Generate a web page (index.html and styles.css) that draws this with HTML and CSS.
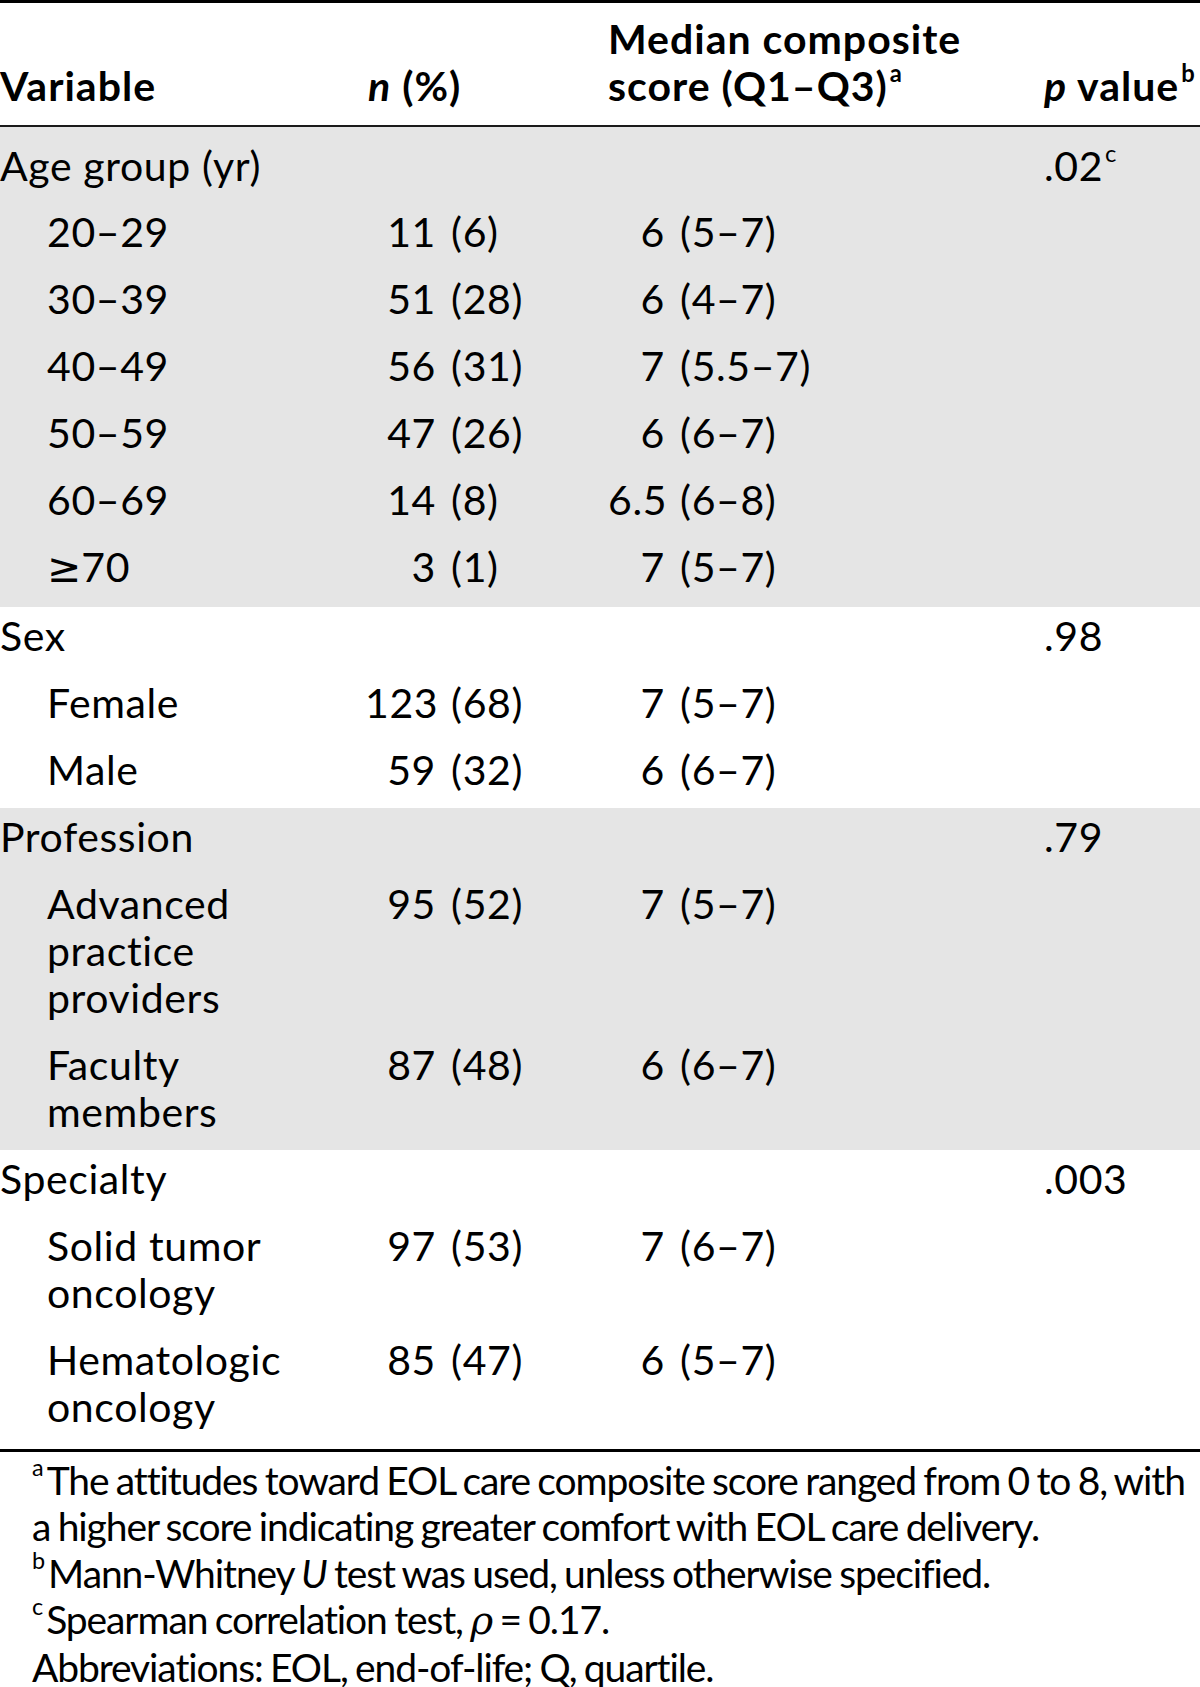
FILE: index.html
```html
<!DOCTYPE html>
<html lang="en">
<head>
<meta charset="utf-8">
<title>Table</title>
<link rel="stylesheet" href="styles.css">
</head>
<body>
<div class="page">
<table class="tbl">
<colgroup><col class="c1"><col class="c2"><col class="c3"><col class="c4"></colgroup>
<thead>
<tr>
<th>Variable</th>
<th class="hn"><i>n</i> (%)</th>
<th>Median composite<br>score (Q1–Q3)<sup>a</sup></th>
<th><i>p</i> value<sup>b</sup></th>
</tr>
</thead>
<tbody class="shade first">
<tr><td>Age group (yr)</td><td></td><td></td><td>.02<sup>c</sup></td></tr>
<tr><td class="ind">20–29</td><td><span class="num">11</span> (6)</td><td><span class="med">6</span> (5–7)</td><td></td></tr>
<tr><td class="ind">30–39</td><td><span class="num">51</span> (28)</td><td><span class="med">6</span> (4–7)</td><td></td></tr>
<tr><td class="ind">40–49</td><td><span class="num">56</span> (31)</td><td><span class="med">7</span> (5.5–7)</td><td></td></tr>
<tr><td class="ind">50–59</td><td><span class="num">47</span> (26)</td><td><span class="med">6</span> (6–7)</td><td></td></tr>
<tr><td class="ind">60–69</td><td><span class="num">14</span> (8)</td><td><span class="med">6.5</span> (6–8)</td><td></td></tr>
<tr><td class="ind"><span class="ge">≥</span>70</td><td><span class="num">3</span> (1)</td><td><span class="med">7</span> (5–7)</td><td></td></tr>
</tbody>
<tbody>
<tr><td>Sex</td><td></td><td></td><td>.98</td></tr>
<tr><td class="ind">Female</td><td><span class="num">123</span> (68)</td><td><span class="med">7</span> (5–7)</td><td></td></tr>
<tr><td class="ind">Male</td><td><span class="num">59</span> (32)</td><td><span class="med">6</span> (6–7)</td><td></td></tr>
</tbody>
<tbody class="shade">
<tr><td>Profession</td><td></td><td></td><td>.79</td></tr>
<tr><td class="ind">Advanced practice providers</td><td><span class="num">95</span> (52)</td><td><span class="med">7</span> (5–7)</td><td></td></tr>
<tr><td class="ind">Faculty members</td><td><span class="num">87</span> (48)</td><td><span class="med">6</span> (6–7)</td><td></td></tr>
</tbody>
<tbody class="last">
<tr><td>Specialty</td><td></td><td></td><td>.003</td></tr>
<tr><td class="ind">Solid tumor oncology</td><td><span class="num">97</span> (53)</td><td><span class="med">7</span> (6–7)</td><td></td></tr>
<tr><td class="ind">Hematologic oncology</td><td><span class="num">85</span> (47)</td><td><span class="med">6</span> (5–7)</td><td></td></tr>
</tbody>
</table>
<div class="notes">
<p><sup>a</sup>The attitudes toward EOL care composite score ranged from 0 to 8, with a higher score indicating greater comfort with EOL care delivery.</p>
<p><sup>b</sup>Mann-Whitney <i>U</i> test was used, unless otherwise specified.</p>
<p><sup>c</sup>Spearman correlation test, <i class="rho">ρ</i> = 0.17.</p>
<p>Abbreviations: EOL, end-of-life; Q, quartile.</p>
</div>
</div>
</body>
</html>
```
FILE: styles.css
```css
html, body {
  margin: 0;
  padding: 0;
  background: #ffffff;
}
body {
  font-family: Lato, "Open Sans", sans-serif;
  color: #000000;
}
.page {
  width: 1200px;
}
.tbl {
  width: 1200px;
  table-layout: fixed;
  border-collapse: separate;
  border-spacing: 0;
  font-size: 41px;
  line-height: 47px;
  letter-spacing: 0.6px;
  border-top: 3px solid #000;
  border-bottom: 3px solid #000;
}
.c1 { width: 365px; }
.c2 { width: 243px; }
.c3 { width: 436px; }
.c4 { width: 156px; }
th {
  font-weight: 700;
  text-align: left;
  vertical-align: bottom;
  padding: 12px 0 16px;
  border-bottom: 2px solid #1a1a1a;
  letter-spacing: 1px;
}
.hn {
  padding-left: 3px;
}
td {
  padding: 5px 0 15px;
  vertical-align: top;
  text-align: left;
  font-weight: 400;
}
.shade {
  background: #e5e5e5;
}
.first tr:first-child td {
  padding-top: 15px;
  padding-bottom: 14px;
}
.last tr:last-child td {
  padding-bottom: 19px;
}
.ind {
  padding-left: 47px;
  padding-right: 40px;
}
.ge {
  font-family: "DejaVu Sans", sans-serif;
  font-weight: 400;
  letter-spacing: 0;
}
.num {
  display: inline-block;
  width: 71px;
  margin-right: 4px;
  text-align: right;
}
.med {
  display: inline-block;
  width: 57px;
  margin-right: 4px;
  text-align: right;
}
sup {
  font-size: 58%;
  line-height: 0;
  vertical-align: 0.8em;
  letter-spacing: 0;
  margin-left: 2px;
}
.notes {
  padding: 5px 0 0 32px;
  font-size: 39px;
  line-height: 46.3px;
  letter-spacing: -1.1px;
  word-spacing: -1.5px;
}
.notes p {
  margin: 0;
}
.notes sup {
  font-size: 60%;
  margin-left: 0;
  margin-right: 3px;
}
.rho {
  font-family: "DejaVu Serif", "Liberation Serif", serif;
}
```
